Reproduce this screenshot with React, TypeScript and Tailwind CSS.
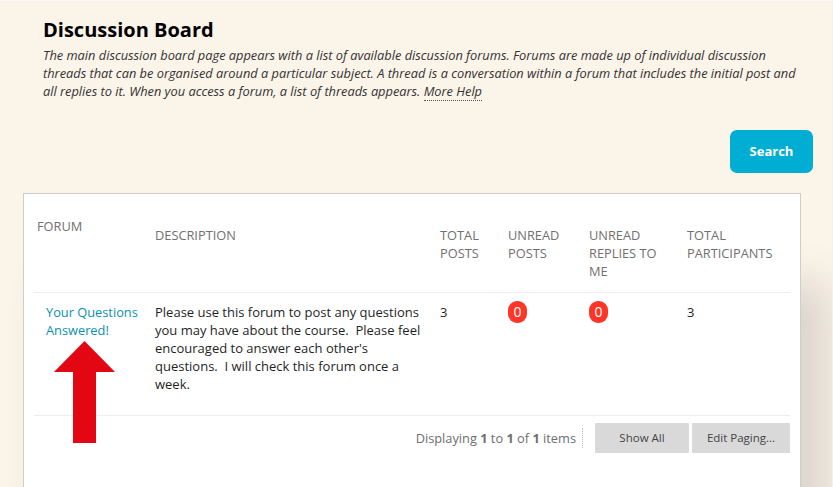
const font = { fontFamily: '"Open Sans", sans-serif' };

const headers = [
  { label: "TOTAL POSTS", cls: "w-[68px] pr-2" },
  { label: "UNREAD POSTS", cls: "w-[81px] pr-2" },
  { label: "UNREAD REPLIES TO ME", cls: "w-[98px] pr-[14px]" },
  { label: "TOTAL PARTICIPANTS", cls: "w-[103px]" },
];

function Badge() {
  return (
    <span className="-mt-[2px] flex h-[22px] w-[19px] items-center justify-center rounded-[9px] bg-[#ff3528] text-[14px] text-white">
      0
    </span>
  );
}

export default function App() {
  return (
    <div className="relative h-[487px] w-[833px] overflow-hidden border-t border-r border-t-[#fdfaf5] border-r-[#f3f2ef] bg-[#fbf4e9] text-[13px] leading-[18px]" style={font}>
      <div className="px-[43px] pt-[17px]">
        <h1 className="text-[20px] font-bold leading-[24px] text-black">Discussion Board</h1>
        <p className="mt-[4px] w-[762px] text-[12.8px] italic leading-[18px] text-[#333333]">
          The main discussion board page appears with a list of available discussion forums. Forums are made up of individual discussion threads that can be organised around a particular subject. A thread is a conversation within a forum that includes the initial post and all replies to it. When you access a forum, a list of threads appears.{" "}
          <a className="border-b border-dotted border-[#555]">More Help</a>
        </p>
      </div>

      <div className="mt-[30px] flex justify-end pr-[19px]">
        <button className="h-[43px] w-[83px] rounded-[7px] bg-[#00aed3] pb-[2px] text-[13px] font-bold text-white">Search</button>
      </div>

      <div className="ml-[23px] mt-[20px] h-[320px] w-[778px] border border-[#cdcdc9] bg-white px-[10px] shadow-[26px_90px_40px_rgba(96,79,88,0.2)]">
        <div className="flex h-[99px] border-b border-[#eeeeee] text-[12.8px] text-[#707070]">
          <div className="w-[121px] pl-[3px] pt-[23px]">FORUM</div>
          <div className="w-[285px] pt-[32px]">DESCRIPTION</div>
          {headers.map((h) => (
            <div key={h.label} className={`${h.cls} pt-[32px]`}>
              {h.label}
            </div>
          ))}
        </div>

        <div className="flex h-[123px] border-b border-[#eeeeee] pt-[10px] text-[#1f1f1f]">
          <a className="w-[121px] pl-[12px] text-[12.8px] text-[#0a8fb0]">
            Your Questions
            <br />
            Answered!
          </a>
          <div className="w-[285px]">
            <p className="whitespace-pre">
              {"Please use this forum to post any questions\nyou may have about the course.  Please feel\nencouraged to answer each other's\nquestions.  I will check this forum once a\nweek."}
            </p>
          </div>
          <div className="w-[68px]">3</div>
          <div className="w-[81px]">
            <Badge />
          </div>
          <div className="w-[98px]">
            <Badge />
          </div>
          <div className="w-[103px]">3</div>
        </div>

        <div className="flex items-center justify-end pt-[7px] text-[12.8px] text-[#6e6e6e]">
          <span>
            Displaying <b>1</b> to <b>1</b> of <b>1</b> items
          </span>
          <span className="ml-[6px] h-[20px] border-l border-dotted border-[#bbb]" />
          <button className="ml-[12px] h-[30px] w-[94px] rounded-[1px] bg-[#d9d9d9] text-[11.5px] text-[#444]">Show All</button>
          <button className="ml-[3px] h-[30px] w-[98px] rounded-[1px] bg-[#d9d9d9] text-[11.5px] text-[#444]">Edit Paging...</button>
        </div>
      </div>

      <svg className="absolute left-[54px] top-[340px]" width="62" height="103" viewBox="0 0 62 103">
        <polygon points="30.5,0 61,31 42,31 42,102 19,102 19,31 0,31" fill="#e30613" />
      </svg>
    </div>
  );
}
